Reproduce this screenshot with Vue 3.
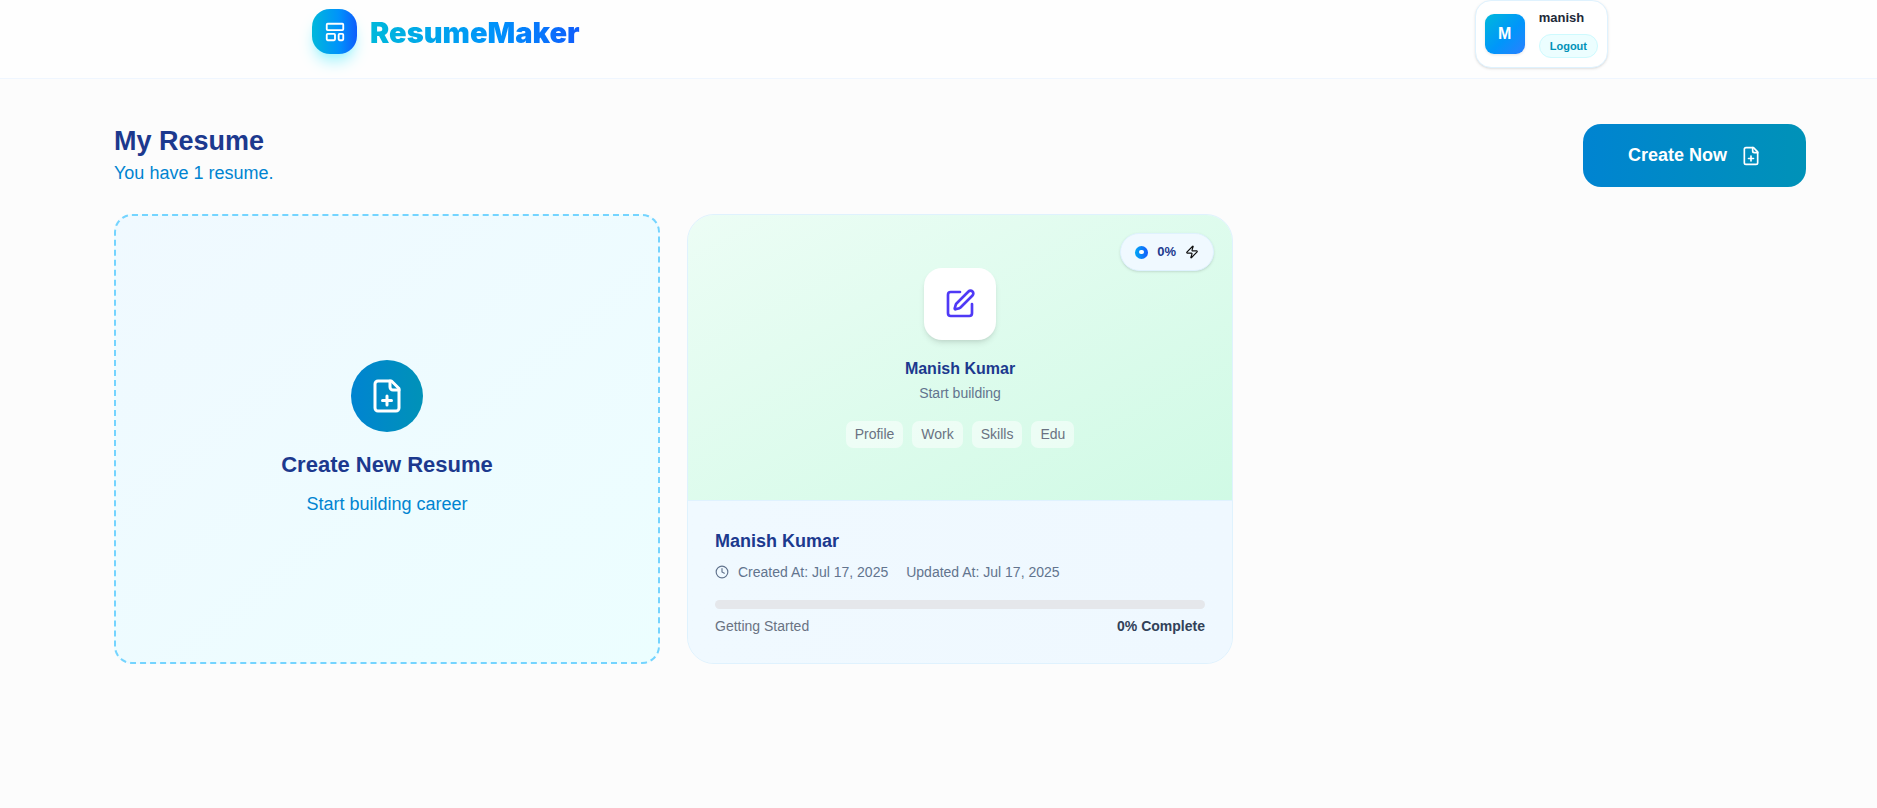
<script setup>
const sections = ['Profile', 'Work', 'Skills', 'Edu']
const progress = 0
</script>

<template>
  <div class="page">
    <header class="topbar">
      <a class="brand" href="#">
        <span class="brand-mark">
          <svg width="22" height="22" viewBox="0 0 24 24" class="icon" aria-hidden="true">
            <rect width="18" height="7" x="3" y="3" rx="1" />
            <rect width="9" height="7" x="3" y="14" rx="1" />
            <rect width="5" height="7" x="16" y="14" rx="1" />
          </svg>
        </span>
        <span class="brand-name">ResumeMaker</span>
      </a>
      <div class="user">
        <div class="avatar">M</div>
        <div class="user-info">
          <span class="user-name">manish</span>
          <button class="logout" type="button">Logout</button>
        </div>
      </div>
    </header>

    <main class="content">
      <div class="heading">
        <div>
          <h1>My Resume</h1>
          <p>You have 1 resume.</p>
        </div>
        <button class="create-now" type="button">
          <span>Create Now</span>
          <svg width="20" height="20" viewBox="0 0 24 24" class="icon" aria-hidden="true">
            <path d="M15 2H6a2 2 0 0 0-2 2v16a2 2 0 0 0 2 2h12a2 2 0 0 0 2-2V7Z" />
            <path d="M14 2v4a2 2 0 0 0 2 2h4" />
            <path d="M9 15h6" />
            <path d="M12 18v-6" />
          </svg>
        </button>
      </div>

      <div class="cards">
        <button class="new-card" type="button">
          <span class="new-icon">
            <svg width="36" height="36" viewBox="0 0 24 24" class="icon" aria-hidden="true">
              <path d="M15 2H6a2 2 0 0 0-2 2v16a2 2 0 0 0 2 2h12a2 2 0 0 0 2-2V7Z" />
              <path d="M14 2v4a2 2 0 0 0 2 2h4" />
              <path d="M9 15h6" />
              <path d="M12 18v-6" />
            </svg>
          </span>
          <span class="new-title">Create New Resume</span>
          <span class="new-sub">Start building career</span>
        </button>

        <article class="resume-card">
          <div class="preview">
            <div class="badge">
              <span class="dot"></span>
              <span>{{ progress }}%</span>
              <svg width="14" height="14" viewBox="0 0 24 24" class="icon zap" aria-hidden="true">
                <path d="M4 14a1 1 0 0 1-.78-1.63l9.9-10.2a.5.5 0 0 1 .86.46l-1.92 6.02A1 1 0 0 0 13 10h7a1 1 0 0 1 .78 1.63l-9.9 10.2a.5.5 0 0 1-.86-.46l1.92-6.02A1 1 0 0 0 11 14z" />
              </svg>
            </div>
            <div class="edit">
              <svg width="32" height="32" viewBox="0 0 24 24" class="icon" aria-hidden="true">
                <path d="M12 3H5a2 2 0 0 0-2 2v14a2 2 0 0 0 2 2h14a2 2 0 0 0 2-2v-7" />
                <path d="M18.375 2.625a1 1 0 0 1 3 3l-9.013 9.014a2 2 0 0 1-.853.505l-2.873.84a.5.5 0 0 1-.62-.62l.84-2.873a2 2 0 0 1 .506-.852z" />
              </svg>
            </div>
            <h3>Manish Kumar</h3>
            <p>Start building</p>
            <div class="chips">
              <span v-for="s in sections" :key="s" class="chip">{{ s }}</span>
            </div>
          </div>
          <div class="details">
            <h2>Manish Kumar</h2>
            <div class="dates">
              <svg width="14" height="14" viewBox="0 0 24 24" class="icon" aria-hidden="true">
                <circle cx="12" cy="12" r="10" />
                <path d="M12 6v6l4 2" />
              </svg>
              <span>Created At: Jul 17, 2025</span>
              <span class="updated">Updated At: Jul 17, 2025</span>
            </div>
            <div class="track" role="progressbar" aria-label="Completion" :aria-valuenow="progress" aria-valuemin="0" aria-valuemax="100">
              <div class="fill" :style="{ width: progress + '%' }"></div>
            </div>
            <div class="status">
              <span>Getting Started</span>
              <strong>{{ progress }}% Complete</strong>
            </div>
          </div>
        </article>
      </div>
    </main>
  </div>
</template>

<style>
body {
  margin: 0;
  background: #fcfcfc;
}
</style>

<style scoped>
.page {
  min-height: 100vh;
  font-family: Arial, "Liberation Sans", sans-serif;
  font-size: 14px;
  line-height: 18px;
  color: #1e2939;
  background: #fcfcfc;
}
h1, h2, h3, p { margin: 0; }
button { font-family: inherit; cursor: pointer; }
.icon {
  display: block;
  flex: none;
  fill: none;
  stroke: currentColor;
  stroke-width: 2;
  stroke-linecap: round;
  stroke-linejoin: round;
}

.topbar {
  display: flex;
  justify-content: space-between;
  align-items: flex-start;
  padding: 0 269px 10px 312px;
  background: #fefefe;
  border-bottom: 1px solid #eff6ff;
}
.brand {
  display: flex;
  align-items: flex-start;
  gap: 13px;
  padding-top: 9px;
  text-decoration: none;
}
.brand-mark {
  display: grid;
  place-items: center;
  width: 45px;
  height: 45px;
  border-radius: 18px;
  color: #fff;
  background: linear-gradient(90deg, #00b8db, #0092fb 60%, #0f5dfc);
  box-shadow: 0 10px 15px -3px #a2f4fd, 0 4px 6px -4px #a2f4fd;
}
.brand-name {
  font-family: "Arial Black", Inter, Arial, sans-serif;
  font-size: 29px;
  font-weight: 900;
  line-height: 48px;
  color: transparent;
  background: linear-gradient(90deg, #00b8db, #0092fb 60%, #0f5dfc);
  -webkit-background-clip: text;
  background-clip: text;
}
.user {
  display: flex;
  align-items: center;
  gap: 14px;
  padding: 7px 9px;
  border: 1px solid #dff2fe;
  border-radius: 16px;
  background: #fff;
  box-shadow: 0 1px 3px rgba(0, 0, 0, 0.1), 0 1px 2px -1px rgba(0, 0, 0, 0.1);
}
.avatar {
  width: 40px;
  height: 40px;
  border-radius: 9px;
  font-size: 16px;
  font-weight: 700;
  line-height: 40px;
  text-align: center;
  color: #fff;
  background: linear-gradient(135deg, #00b8db, #0096fa 55%, #2b7fff);
  box-shadow: 0 1px 3px rgba(0, 0, 0, 0.1);
}
.user-info {
  display: flex;
  flex-direction: column;
  align-items: flex-start;
  gap: 6px;
  padding-bottom: 2px;
}
.user-name {
  font-size: 13px;
  font-weight: 700;
  line-height: 20px;
}
.logout {
  padding: 0 10px;
  border: 1px solid #cefafe;
  border-radius: 12px;
  font-size: 11px;
  font-weight: 700;
  line-height: 22px;
  color: #0092b8;
  background: #ecfeff;
}

.content {
  display: flex;
  flex-direction: column;
  gap: 27px;
  padding: 45px 71px 45px 114px;
}
.heading {
  display: flex;
  justify-content: space-between;
  align-items: center;
}
h1 {
  margin-bottom: 2px;
  font-size: 27px;
  line-height: 34px;
  color: #1c398e;
}
.heading p {
  font-size: 18px;
  line-height: 27px;
  color: #0084d1;
}
.create-now {
  display: flex;
  align-items: center;
  gap: 14px;
  padding: 18px 45px;
  border: 0;
  border-radius: 18px;
  font-size: 18px;
  font-weight: 700;
  line-height: 27px;
  color: #fff;
  background: linear-gradient(90deg, #0084d1, #0092b8);
}
.cards {
  display: grid;
  grid-template-columns: repeat(3, minmax(0, 1fr));
  gap: 27px;
}
.new-card {
  display: flex;
  flex-direction: column;
  align-items: center;
  justify-content: center;
  min-height: 450px;
  padding: 27px;
  border: 2px dashed #74d4ff;
  border-radius: 18px;
  background: linear-gradient(to bottom right, #f0f9ff, #ecfeff);
}
.new-icon {
  display: grid;
  place-items: center;
  width: 72px;
  height: 72px;
  margin-bottom: 17px;
  border-radius: 50%;
  color: #fff;
  background: linear-gradient(90deg, #0084d1, #0092b8);
}
.new-title {
  margin-bottom: 11px;
  font-size: 22px;
  font-weight: 700;
  line-height: 31px;
  color: #1c398e;
}
.new-sub {
  font-size: 18px;
  line-height: 27px;
  color: #0084d1;
}

.resume-card {
  display: flex;
  flex-direction: column;
  overflow: hidden;
  border: 1px solid #dff2fe;
  border-radius: 27px;
  background: #f0f9ff;
}
.preview {
  position: relative;
  flex: 1;
  display: flex;
  flex-direction: column;
  align-items: center;
  justify-content: center;
  background: linear-gradient(to bottom right, #ecfdf5, #d0fae5);
}
.badge {
  position: absolute;
  top: 18px;
  right: 18px;
  display: flex;
  align-items: center;
  gap: 9px;
  padding: 9px 14px;
  border: 1px solid #dff2fe;
  border-radius: 19px;
  font-size: 13px;
  font-weight: 700;
  color: #1c398e;
  background: #f0f9ff;
  box-shadow: 0 1px 3px rgba(0, 0, 0, 0.1), 0 1px 2px -1px rgba(0, 0, 0, 0.1);
}
.dot {
  display: grid;
  place-items: center;
  width: 13px;
  height: 13px;
  border-radius: 50%;
  background: linear-gradient(90deg, #00a6f4, #155dfc);
}
.dot::after {
  content: "";
  width: 5px;
  height: 4px;
  border-radius: 2px;
  background: #fff;
}
.zap { color: #111; }
.edit {
  display: grid;
  place-items: center;
  width: 72px;
  height: 72px;
  margin-bottom: 18px;
  border-radius: 18px;
  color: #4f39f6;
  background: #fff;
  box-shadow: 0 4px 6px -1px rgba(0, 0, 0, 0.1), 0 2px 4px -2px rgba(0, 0, 0, 0.1);
}
h3 {
  margin-bottom: 4px;
  font-size: 16px;
  line-height: 22px;
  color: #1c398e;
}
.preview p { color: #62748e; }
.chips {
  display: flex;
  gap: 9px;
  margin-top: 19px;
}
.chip {
  padding: 0 9px;
  border-radius: 7px;
  line-height: 27px;
  color: #6a7282;
  background: rgba(255, 255, 255, 0.5);
}
.details {
  padding: 27px 27px 28px;
  border-top: 1px solid #dff2fe;
  background: linear-gradient(90deg, #f0f9ff, #eff8ff);
}
h2 {
  margin-bottom: 9px;
  font-size: 18px;
  line-height: 26px;
  color: #1c398e;
}
.dates {
  display: flex;
  align-items: center;
  gap: 9px;
  color: #62748e;
}
.updated { margin-left: 9px; }
.track {
  height: 9px;
  margin: 19px 0 8px;
  overflow: hidden;
  border-radius: 5px;
  background: #e5e7eb;
}
.fill {
  height: 100%;
  background: #0084d1;
}
.status {
  display: flex;
  justify-content: space-between;
  color: #6a7282;
}
.status strong { color: #314158; }
</style>
